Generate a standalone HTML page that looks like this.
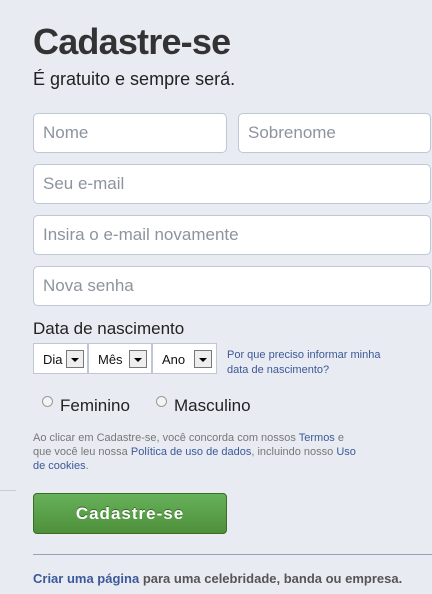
<!DOCTYPE html>
<html><head><meta charset="utf-8"><style>
*{margin:0;padding:0;box-sizing:border-box}
body{width:432px;height:594px;background:#e9ebf2;font-family:"Liberation Sans",sans-serif;position:relative;overflow:hidden;color:#333}
.a{position:absolute}
h1{position:absolute;left:33px;top:21px;font-size:36px;font-weight:bold;color:#333;letter-spacing:-0.8px}
.sub{left:33px;top:69px;font-size:18px;color:#222}
.in{position:absolute;background:#fff;border:1px solid #bdc7d8;border-radius:5px;height:40px;font-size:17px;color:#8d949e;padding:9px 9px}
.sel{position:absolute;top:343px;height:31px;background:#fff;border:1px solid #bdc7d8;font-size:13px;color:#111;padding:8px 0 0 9px}
.sel i{position:absolute;top:6px;width:18px;height:18px;border:1px solid #777;background:#eee}
.sel i:after{content:"";position:absolute;left:4px;top:7px;border-left:4px solid transparent;border-right:4px solid transparent;border-top:4px solid #000}
.lk{color:#3b5998}
.rad{position:absolute;top:396px;width:11px;height:11px;border-radius:50%;border:1px solid #999;background:#f4f4f4}
</style></head><body>
<div class="a" style="left:0;top:490px;width:16px;height:1px;background:#ccc"></div>
<h1>Cadastre-se</h1>
<div class="a sub">É gratuito e sempre será.</div>
<div class="in" style="left:33px;top:113px;width:194px">Nome</div>
<div class="in" style="left:238px;top:113px;width:193px">Sobrenome</div>
<div class="in" style="left:33px;top:164px;width:398px">Seu e-mail</div>
<div class="in" style="left:33px;top:215px;width:398px">Insira o e-mail novamente</div>
<div class="in" style="left:33px;top:266px;width:398px">Nova senha</div>
<div class="a" style="left:33px;top:319px;font-size:17px;color:#222">Data de nascimento</div>
<div class="sel" style="left:33px;width:55px">Dia<i style="left:32px"></i></div>
<div class="sel" style="left:88px;width:64px">Mês<i style="left:40px"></i></div>
<div class="sel" style="left:152px;width:65px">Ano<i style="left:41px"></i></div>
<div class="a lk" style="left:227px;top:348px;font-size:11px;line-height:15px">Por que preciso informar minha<br>data de nascimento?</div>
<div class="rad" style="left:42px"></div>
<div class="a" style="left:60px;top:396px;font-size:17px;color:#222">Feminino</div>
<div class="rad" style="left:156px"></div>
<div class="a" style="left:174px;top:396px;font-size:17px;color:#222">Masculino</div>
<div class="a" style="left:33px;top:431px;font-size:11px;line-height:14px;color:#777">Ao clicar em Cadastre-se, você concorda com nossos <span class="lk">Termos</span> e<br>que você leu nossa <span class="lk">Política de uso de dados</span>, incluindo nosso <span class="lk">Uso</span><br><span class="lk">de cookies</span>.</div>
<div class="a" style="left:33px;top:493px;width:194px;height:41px;border:1px solid #3b6e22;border-radius:4px;background:linear-gradient(#67b15a,#4e8f3a);color:#fff;font-weight:bold;font-size:17px;text-align:center;line-height:39px;letter-spacing:1px;text-shadow:0 -1px 0 #356822">Cadastre-se</div>
<div class="a" style="left:33px;top:554px;width:399px;height:1px;background:#9aa0b8"></div>
<div class="a" style="left:33px;top:571px;font-size:13px;font-weight:bold;color:#555"><span class="lk">Criar uma página</span> para uma celebridade, banda ou empresa.</div>
</body></html>
